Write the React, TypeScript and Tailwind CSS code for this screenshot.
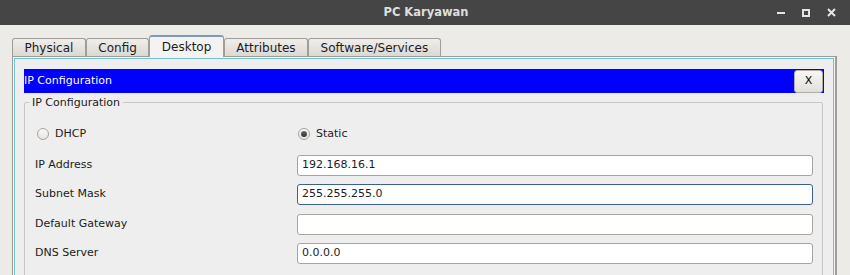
import React from 'react';

const TABS = ['Physical', 'Config', 'Desktop', 'Attributes', 'Software/Services'];

const FIELDS = [
  { label: 'IP Address', value: '192.168.16.1', focused: false, gap: 'mt-[11px]' },
  { label: 'Subnet Mask', value: '255.255.255.0', focused: true, gap: 'mt-[8px]' },
  { label: 'Default Gateway', value: '', focused: false, gap: 'mt-[9px]' },
  { label: 'DNS Server', value: '0.0.0.0', focused: false, gap: 'mt-[8px]' },
];

const Radio: React.FC<{ checked?: boolean; label: string }> = ({ checked, label }) => (
  <label className="flex items-center gap-[6px]">
    <span className="flex w-[12px] h-[12px] items-center justify-center rounded-full border border-[#a8a39e] bg-gradient-to-b from-[#fafafa] to-[#e6e4e1]">
      {checked && <span className="w-[6px] h-[6px] rounded-full bg-gradient-to-b from-[#6a6a6a] to-[#333]" />}
    </span>
    <span>{label}</span>
  </label>
);

const App: React.FC = () => {
  return (
    <div className="w-[850px] h-[275px] overflow-hidden bg-[#edebe7] text-[#1c1c1c] font-['DejaVu_Sans',sans-serif]">
      {/* Title bar */}
      <div className="h-[25px] bg-[#454545] grid grid-cols-[1fr_auto_1fr] items-center">
        <div />
        <div className="text-[11.5px] font-bold text-[#dedede] pl-[2px]">PC Karyawan</div>
        <div className="flex items-center justify-end gap-[17px] pr-[14px]">
          <span className="block w-[8px] h-[2px] bg-[#e4e4e4] mt-[1px]" />
          <span className="block w-[8px] h-[8px] border-2 border-[#e4e4e4]" />
          <svg width="9" height="9" viewBox="0 0 9 9" className="text-[#e4e4e4]">
            <path d="M1 1 L8 8 M8 1 L1 8" stroke="currentColor" strokeWidth="2" />
          </svg>
        </div>
      </div>

      {/* Tabs */}
      <div className="flex items-end h-[31px] pl-[12px]">
        {TABS.map((tab) => {
          const active = tab === 'Desktop';
          return (
            <div
              key={tab}
              className={
                active
                  ? 'relative z-10 -mb-px h-[22px] px-[11.5px] flex items-center text-[12px] border border-[#a09c98] border-t-2 border-t-[#7d9bb8] border-b-0 rounded-t-[3px] bg-[#f4f3f1]'
                  : 'h-[18px] px-[11.5px] flex items-center text-[12px] border border-[#a09c98] border-b-0 rounded-t-[3px] bg-gradient-to-b from-[#f0eeeb] to-[#dcd8d3]'
              }
            >
              {tab}
            </div>
          );
        })}
      </div>

      {/* Tab panel */}
      <div className="ml-[12px] w-[825px] h-[300px] border-t border-l border-r-2 border-[#a09c98] bg-[#f2f2f2] pl-px pt-px pr-px">
        <div className="h-full border-t border-l border-r border-[#72c3d6] bg-[#eeeeee] px-[9px] pt-[10px]">
          {/* Blue header */}
          <div className="h-[24px] bg-[#0000ff] flex items-center justify-between">
            <span className="text-[11px] text-white">IP Configuration</span>
            <button className="mr-px mt-px w-[29px] h-[23px] rounded-[3px] border border-[#b0aca8] bg-gradient-to-b from-[#f8f7f5] to-[#e2dfdb] text-[11px] text-black flex items-center justify-center">
              X
            </button>
          </div>

          {/* Group box */}
          <fieldset className="mt-[3px] w-[799px] border border-[#c9c6c3] rounded-[2px] pl-[10px] pr-[9px] pb-[20px] text-[11px]">
            <legend className="ml-[-6px] px-[3px] leading-[13px]">IP Configuration</legend>

            <div className="grid grid-cols-[262px_1fr] items-center h-[20px] mt-[15px]">
              <div className="pl-[2px]">
                <Radio label="DHCP" />
              </div>
              <div className="pl-px">
                <Radio checked label="Static" />
              </div>
            </div>

            {FIELDS.map((f) => (
              <div key={f.label} className={`grid grid-cols-[262px_1fr] items-center h-[21px] ${f.gap}`}>
                <span>{f.label}</span>
                <div
                  className={
                    f.focused
                      ? 'h-[21px] rounded-[3px] border border-[#3d6189] bg-white px-[4px] flex items-center'
                      : 'h-[21px] rounded-[3px] border border-[#aaa49e] bg-white px-[4px] flex items-center'
                  }
                >
                  {f.value}
                </div>
              </div>
            ))}
          </fieldset>
        </div>
      </div>
    </div>
  );
};

export default App;
